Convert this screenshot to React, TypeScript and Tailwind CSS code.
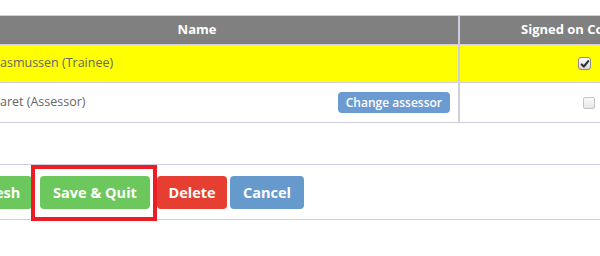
import React from "react";

const font = { fontFamily: '"Open Sans", "Liberation Sans", sans-serif' };

function CheckBox({ checked }: { checked?: boolean }) {
  if (checked) {
    return (
      <span className="flex h-[13px] w-[13px] items-center justify-center rounded-[3px] border border-[#8a8a8a] bg-gradient-to-b from-[#fdfdfd] to-[#d6d6d6]">
        <svg viewBox="0 0 12 12" className="h-[10px] w-[10px]">
          <path d="M2 6.5 L4.6 9 L10 2.5" fill="none" stroke="#2b2b2b" strokeWidth="2.4" strokeLinecap="round" strokeLinejoin="round" />
        </svg>
      </span>
    );
  }
  return <span className="block h-[12px] w-[12px] rounded-[2px] border border-[#c4c4c4] bg-gradient-to-b from-[#fafafa] to-[#e6e6e6]" />;
}

export default function App() {
  return (
    <div className="h-[256px] w-[600px] overflow-hidden bg-white" style={font}>
      <div className="h-[15px]" />

      {/* Table */}
      <div className="border-t border-[#cfcde0]">
        <div className="grid h-[29px] grid-cols-[460px_1fr] border-b border-[#cfcde0] bg-[#808080] text-[13px] font-bold text-white">
          <div className="flex items-center justify-center border-r-2 border-[#cfcde0] pr-[64px]">Name</div>
          <div className="flex items-center overflow-hidden whitespace-nowrap pl-[61px]">Signed on Completion</div>
        </div>

        <div className="grid h-[38px] grid-cols-[460px_1fr] border-b border-[#cfcde0] bg-[#ffff00] text-[12.5px] text-[#666]">
          <div className="flex items-center border-r-2 border-[#cfcde0] whitespace-nowrap">asmussen (Trainee)</div>
          <div className="flex items-center pl-[118px]">
            <CheckBox checked />
          </div>
        </div>

        <div className="grid h-[40px] grid-cols-[460px_1fr] border-b border-[#cfcde0] text-[12.5px] text-[#666]">
          <div className="flex items-center justify-between border-r-2 border-[#cfcde0] pr-[8px] whitespace-nowrap">
            <span>aret (Assessor)</span>
            <button className="h-[21px] rounded-[4px] bg-[#6b9bd0] px-[8px] text-[12px] font-semibold text-white">
              Change assessor
            </button>
          </div>
          <div className="flex items-center pl-[123px]">
            <CheckBox />
          </div>
        </div>
      </div>

      <div className="h-[41px]" />

      {/* Actions */}
      <div className="relative border-y border-[#cfcde0] pb-[10px] pt-[11px]">
        <div className="flex items-center text-[14.5px] font-bold text-white">
          <button className="-ml-[47px] h-[33px] w-[79px] rounded-[4px] bg-[#6cc75c]">Refresh</button>
          <button className="ml-[8px] h-[33px] w-[110px] rounded-[4px] bg-[#6cc75c]">Save &amp; Quit</button>
          <button className="ml-[7px] h-[33px] w-[70px] rounded-[4px] bg-[#e63e31]">Delete</button>
          <button className="ml-[3px] h-[33px] w-[74px] rounded-[4px] bg-[#6699cc]">Cancel</button>
        </div>
        <div className="absolute left-[31px] top-0 h-[56px] w-[126px] border-4 border-[#ec1c24]" />
      </div>
    </div>
  );
}
